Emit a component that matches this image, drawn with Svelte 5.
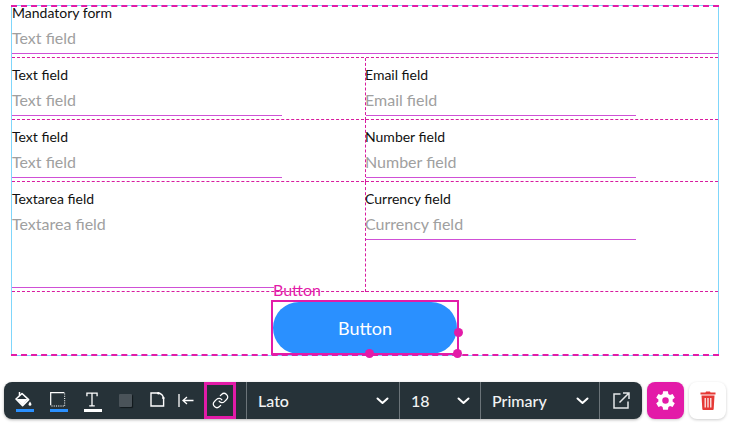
<script lang="ts">
  const rows = [
    [{ label: 'Text field', hint: 'Text field' }, { label: 'Email field', hint: 'Email field' }],
    [{ label: 'Text field', hint: 'Text field' }, { label: 'Number field', hint: 'Number field' }]
  ];
  const selects = [
    { name: 'font', text: 'Lato' },
    { name: 'size', text: '18' },
    { name: 'variant', text: 'Primary' }
  ];
</script>

<div class="page">
  <div class="form">
    <div class="row row--first">
      <div class="field">
        <div class="label">Mandatory form</div>
        <div class="input input--full">Text field</div>
      </div>
    </div>

    {#each rows as cols}
      <div class="row row--split">
        {#each cols as col, i}
          <div class="field" class:field--second={i === 1}>
            <div class="label">{col.label}</div>
            <div class="input">{col.hint}</div>
          </div>
        {/each}
      </div>
    {/each}

    <div class="row row--split">
      <div class="field">
        <div class="label">Textarea field</div>
        <div class="input input--area">Textarea field</div>
      </div>
      <div class="field field--second">
        <div class="label">Currency field</div>
        <div class="input">Currency field</div>
      </div>
    </div>

    <div class="row row--button">
      <div class="selected">
        <span class="selected__label">Button</span>
        <button class="cta">Button</button>
        <i class="handle handle--right"></i>
        <i class="handle handle--bottom"></i>
        <i class="handle handle--corner"></i>
      </div>
    </div>
  </div>

  <div class="bar">
    <div class="toolbar">
      <div class="tools">
        <span class="tool tool--wide">
          <svg width="17" height="17" viewBox="0 0 17 17">
            <path d="M4.5 1 L4.500 4.500" stroke="#fff" stroke-width="1.5" fill="none" />
            <path d="M7 2.500 L13.600 8.600 L7.600 14.600 L1 8 Z" fill="none" stroke="#fff" stroke-width="1.600" stroke-linejoin="round" />
            <path d="M1.600 8 L13 8 L7.600 14 Z" fill="#fff" />
            <path d="M15 10.500 C14 12 13.600 12.600 13.600 13.400 A1.400 1.400 0 0 0 16.400 13.400 C16.400 12.600 16 12 15 10.500 Z" fill="#fff" />
          </svg>
          <b class="swatch swatch--blue"></b>
        </span>
        <span class="tool tool--wide">
          <svg width="16" height="15" viewBox="0 0 17 16">
            <path d="M.7 14 V.7 H15.300" fill="none" stroke="#fff" stroke-width="1.300" />
            <path d="M15.600 1.500 V15 H1" fill="none" stroke="#fff" stroke-width="1.100" stroke-dasharray="1.200 1.200" />
          </svg>
          <b class="swatch swatch--blue"></b>
        </span>
        <span class="tool tool--wide">
          <svg width="12" height="15" viewBox="0 0 13 16">
            <path d="M1 4.500 V1 H12 V4.500 M6.500 1 V15 M3.500 15 H9.500" fill="none" stroke="#fff" stroke-width="1.400" />
          </svg>
          <b class="swatch swatch--white"></b>
        </span>
        <span class="tool tool--wide">
          <b class="fill-chip"></b>
        </span>
        <span class="tool tool--page">
          <svg width="15" height="15" viewBox="0 0 15 15">
            <path d="M1 14 V1 H8 C11 1 13.600 3.600 13.600 7 V14 Z" fill="none" stroke="#fff" stroke-width="1.400" />
            <circle cx="8.400" cy="1.200" r="1.200" fill="#fff" />
            <circle cx="13.400" cy="6" r="1.200" fill="#fff" />
          </svg>
        </span>
        <span class="tool tool--align">
          <svg width="16" height="13" viewBox="0 0 16 13">
            <path d="M1 0 V13 M15.500 6.500 H5 M9 3 L5 6.500 L9 10" fill="none" stroke="#fff" stroke-width="1.300" />
          </svg>
        </span>
        <span class="tool tool--link">
          <svg width="17" height="17" viewBox="0 0 24 24">
            <path d="M10 13a5 5 0 0 0 7.540.54l3-3a5 5 0 0 0-7.070-7.070l-1.720 1.710" fill="none" stroke="#fff" stroke-width="1.700" stroke-linecap="round" />
            <path d="M14 11a5 5 0 0 0-7.540-.54l-3 3a5 5 0 0 0 7.070 7.070l1.710-1.710" fill="none" stroke="#fff" stroke-width="1.700" stroke-linecap="round" />
          </svg>
        </span>
      </div>

      {#each selects as s}
        <div class="select select--{s.name}">
          <span>{s.text}</span>
          <svg width="13" height="8" viewBox="0 0 13 8">
            <path d="M1.500 1.500 L6.500 6 L11.500 1.500" fill="none" stroke="#fff" stroke-width="2" stroke-linecap="round" stroke-linejoin="round" />
          </svg>
        </div>
      {/each}

      <div class="external">
        <svg width="17" height="17" viewBox="0 0 17 17">
          <path d="M7.500 2 H1 V16 H15 V9.500" fill="none" stroke="#e4e6e7" stroke-width="1.500" />
          <path d="M6.500 10.500 L15.500 1.500 M10 1 H16 V7" fill="none" stroke="#e4e6e7" stroke-width="1.500" />
        </svg>
      </div>
    </div>

    <div class="action action--settings">
      <svg width="23" height="23" viewBox="0 0 24 24">
        <path fill="#fff" fill-rule="evenodd" d="M19.400 13a7.600 7.600 0 0 0 0-2l2.300-1.800-2.300-4-2.700 1.100a7.700 7.700 0 0 0-1.700-1L14.500 2.400h-5L9 5.300a7.700 7.700 0 0 0-1.700 1L4.600 5.200l-2.300 4L4.600 11a7.600 7.600 0 0 0 0 2l-2.300 1.800 2.300 4 2.700-1.100a7.700 7.700 0 0 0 1.700 1l.5 2.900h5l.5-2.900a7.700 7.700 0 0 0 1.700-1l2.700 1.100 2.300-4zM12 15.400a3.400 3.400 0 1 1 0-6.800 3.400 3.400 0 0 1 0 6.800z" />
      </svg>
    </div>
    <div class="action action--delete">
      <svg width="16" height="19" viewBox="0 0 16 19">
        <path d="M5.500 1.500 L6 .5 H10 L10.500 1.500 H15.500 V3.500 H.5 V1.500 Z" fill="#e53935" />
        <path fill="#e53935" fill-rule="evenodd" d="M1.500 4.500 H14.500 L13.700 18 A1 1 0 0 1 12.700 19 H3.300 A1 1 0 0 1 2.300 18 Z M4.600 7 V16.500 H5.800 V7 Z M7.400 7 V16.500 H8.600 V7 Z M10.200 7 V16.500 H11.400 V7 Z" />
      </svg>
    </div>
  </div>
</div>

<style>
  :global(body) {
    margin: 0;
    background: #fff;
    font-family: Lato, 'Liberation Sans', sans-serif;
  }

  .page {
    padding: 5px 0 0 11px;
    width: 723px;
    height: 419px;
  }

  .form {
    position: relative;
    box-sizing: border-box;
    width: 708px;
    height: 351px;
    border: 1px solid #7fd6fb;
  }

  .form::before,
  .form::after {
    content: '';
    position: absolute;
    left: -1px;
    right: -1px;
    border-top: 2px dashed #e31ba8;
  }

  .form::before {
    top: -1px;
  }

  .form::after {
    bottom: -1px;
  }

  .row {
    box-sizing: border-box;
    padding-top: 8px;
    border-bottom: 1px dashed #d81b9f;
  }

  .row--first {
    display: flow-root;
    height: 52px;
    padding-top: 0;
  }

  .row--first .field {
    margin-top: -2px;
  }

  .row--split {
    display: grid;
    grid-template-columns: 353px 353px;
  }

  .row--button {
    height: 63px;
    padding-top: 0;
    border-bottom: 0;
    display: flex;
    justify-content: center;
  }

  .field--second {
    border-left: 1px dashed #d81b9f;
    margin-bottom: -1px;
    margin-top: -8px;
    padding-top: 8px;
    text-indent: -1px;
  }

  .label {
    height: 18px;
    font-size: 14px;
    line-height: 18px;
    color: #111;
  }

  .input {
    width: 270px;
    height: 31px;
    margin-bottom: 3px;
    border-bottom: 1px solid #cf50d6;
    font-size: 16px;
    line-height: 32px;
    color: #a0a0a0;
  }

  .input--full {
    width: 706px;
  }

  .input--area {
    height: 79px;
    width: 262px;
  }

  .selected {
    position: relative;
    align-self: flex-start;
    margin-top: 8px;
    padding: 2px 2px 1px;
    outline: 2px solid #e31ba8;
    outline-offset: -2px;
    width: 184px;
    height: 52px;
  }

  .selected__label {
    position: absolute;
    left: 2px;
    top: -20px;
    font-size: 16px;
    line-height: 20px;
    color: #e31ba8;
  }

  .cta {
    display: block;
    width: 184px;
    height: 52px;
    padding: 0;
    border: 0;
    border-radius: 26px;
    background: #2a90ff;
    color: #fff;
    font-family: inherit;
    font-size: 18px;
  }

  .handle {
    position: absolute;
    width: 9px;
    height: 9px;
    border-radius: 50%;
    background: #e31ba8;
  }

  .handle--right {
    right: -4px;
    top: 28px;
  }

  .handle--bottom {
    left: 94px;
    bottom: -3px;
  }

  .handle--corner {
    right: -3px;
    bottom: -3px;
  }

  .bar {
    display: flex;
    margin: 26px 0 0 -7px;
    gap: 5px;
  }

  .toolbar {
    display: flex;
    width: 638px;
    height: 37px;
    border-radius: 8px;
    background: #263238;
    box-shadow: 0 1px 3px rgba(0, 0, 0, 0.3);
    color: #f2f3f3;
  }

  .tools {
    display: flex;
    width: 242px;
    padding-left: 4px;
    box-sizing: border-box;
  }

  .tool {
    position: relative;
    display: flex;
    align-items: center;
    justify-content: center;
    box-sizing: border-box;
    height: 37px;
    padding-bottom: 3px;
  }

  .tool--wide {
    width: 34px;
  }

  .tool--wide svg {
    margin-right: 3px;
  }

  .tool--page {
    width: 26px;
  }

  .tool--align {
    width: 32px;
  }

  .tool--align svg {
    margin-top: 3px;
  }

  .tool--link {
    width: 32px;
    margin-left: 2px;
    padding-bottom: 0;
    border: 3px solid #e31ba8;
  }

  .swatch {
    position: absolute;
    left: 8px;
    bottom: 7px;
    width: 18px;
    height: 3px;
  }

  .swatch--blue {
    background: #2a90ff;
  }

  .swatch--white {
    background: #fff;
  }

  .fill-chip {
    width: 13px;
    height: 13px;
    margin: 3px 3px 0 0;
    border-radius: 1px;
    background: #4a5359;
    box-shadow: 1px 1px 1px #11181c;
  }

  .select {
    display: flex;
    align-items: center;
    justify-content: space-between;
    box-sizing: border-box;
    height: 37px;
    padding: 0 10px 0 11px;
    border-left: 1px solid #6b7479;
    font-size: 16px;
    font-weight: 500;
  }

  .select--font {
    width: 153px;
  }

  .select--size {
    width: 81px;
  }

  .select--variant {
    width: 119px;
  }

  .external {
    display: flex;
    flex: 1;
    align-items: center;
    justify-content: center;
    border-left: 1px solid #6b7479;
  }

  .action {
    display: flex;
    align-items: center;
    justify-content: center;
    width: 37px;
    height: 37px;
    border-radius: 8px;
    box-shadow: 0 1px 3px rgba(0, 0, 0, 0.2);
  }

  .action--settings {
    background: #e31ba8;
  }

  .action--delete {
    background: #fff;
  }
</style>
